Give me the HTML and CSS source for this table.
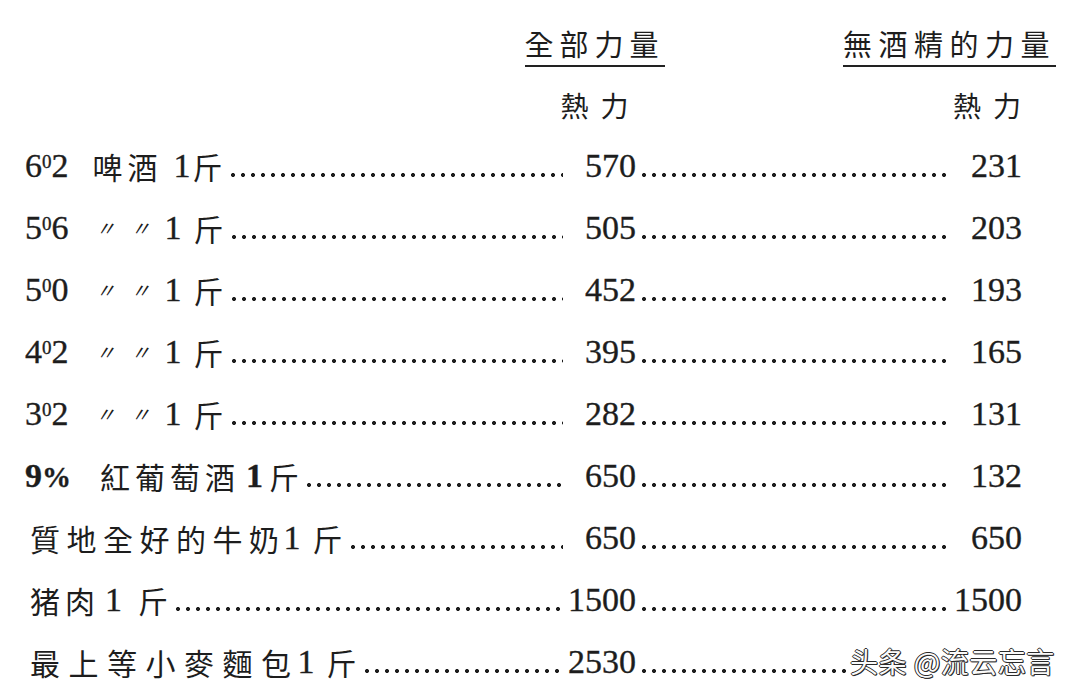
FILE: index.html
```html
<!DOCTYPE html>
<html lang="zh-Hant">
<head>
<meta charset="utf-8">
<title>熱力表</title>
<link rel="stylesheet" href="styles.css">
</head>
<body>
<div class="page">
  <div class="hrow hrow1">
    <span class="head head-n1"><span class="ul">全部力量</span></span>
    <span class="head head-n2"><span class="ul wide">無酒精的力量</span></span>
  </div>
  <div class="hrow hrow2">
    <span class="unit unit-n1">熱力</span>
    <span class="unit unit-n2">熱力</span>
  </div>

  <div class="row">
    <div class="label"><span class="code">6<sup>0</sup>2</span><span class="cjk gap-l">啤酒</span><span class="one">1</span><span class="cjk">斤</span><span class="lead"></span></div>
    <div class="n1">570</div><div class="lead lead2"></div><div class="n2">231</div>
  </div>
  <div class="row">
    <div class="label"><span class="code">5<sup>0</sup>6</span><span class="ditto d1">〃</span><span class="ditto">〃</span><span class="one one-d">1</span><span class="cjk">斤</span><span class="lead"></span></div>
    <div class="n1">505</div><div class="lead lead2"></div><div class="n2">203</div>
  </div>
  <div class="row">
    <div class="label"><span class="code">5<sup>0</sup>0</span><span class="ditto d1">〃</span><span class="ditto">〃</span><span class="one one-d">1</span><span class="cjk">斤</span><span class="lead"></span></div>
    <div class="n1">452</div><div class="lead lead2"></div><div class="n2">193</div>
  </div>
  <div class="row">
    <div class="label"><span class="code">4<sup>0</sup>2</span><span class="ditto d1">〃</span><span class="ditto">〃</span><span class="one one-d">1</span><span class="cjk">斤</span><span class="lead"></span></div>
    <div class="n1">395</div><div class="lead lead2"></div><div class="n2">165</div>
  </div>
  <div class="row">
    <div class="label"><span class="code">3<sup>0</sup>2</span><span class="ditto d1">〃</span><span class="ditto">〃</span><span class="one one-d">1</span><span class="cjk">斤</span><span class="lead"></span></div>
    <div class="n1">282</div><div class="lead lead2"></div><div class="n2">131</div>
  </div>
  <div class="row">
    <div class="label"><span class="code bold">9<span class="pct">%</span></span><span class="cjk gap-w">紅葡萄酒</span><span class="one one-w bold">1</span><span class="cjk">斤</span><span class="lead"></span></div>
    <div class="n1">650</div><div class="lead lead2"></div><div class="n2">132</div>
  </div>
  <div class="row">
    <div class="label"><span class="cjk first milk">質地全好的牛奶</span><span class="one one-t">1</span><span class="cjk">斤</span><span class="lead"></span></div>
    <div class="n1">650</div><div class="lead lead2"></div><div class="n2">650</div>
  </div>
  <div class="row">
    <div class="label"><span class="cjk first">猪肉</span><span class="one one-p">1</span><span class="cjk">斤</span><span class="lead"></span></div>
    <div class="n1">1500</div><div class="lead lead2"></div><div class="n2">1500</div>
  </div>
  <div class="row">
    <div class="label"><span class="cjk first bread">最上等小麥麵包</span><span class="one one-t">1</span><span class="cjk">斤</span><span class="lead"></span></div>
    <div class="n1">2530</div><div class="lead lead2"></div><div class="n2"></div>
  </div>

  <div class="watermark">头条 @流云忘言</div>
</div>
</body>
</html>
```

FILE: styles.css
```css
html, body {
  margin: 0;
  padding: 0;
  background: #ffffff;
}

body {
  color: #1d1d1d;
  font-family: "Liberation Serif", "Noto Sans CJK TC", serif;
}

.page {
  position: relative;
  width: 1080px;
  height: 696px;
  padding-left: 25px;
  box-sizing: border-box;
  overflow: hidden;
}

.row,
.hrow {
  display: grid;
  grid-template-columns: 538px 73px 314px 74px;
}

/* header line 1 */
.hrow1 {
  height: 75px;
  align-items: start;
}

.head {
  padding-top: 25px;
  font-family: "Noto Sans CJK TC", sans-serif;
  font-size: 29px;
  line-height: 37px;
  white-space: nowrap;
}

.head-n1 {
  grid-column: 2;
  justify-self: center;
  margin-right: 10px;
}

.head-n2 {
  grid-column: 4;
  justify-self: end;
  margin-right: -32px;
}

.ul {
  display: inline-block;
  letter-spacing: 6px;
  padding-bottom: 3px;
  border-bottom: 2px solid #222;
}

.ul.wide {
  letter-spacing: 6.5px;
}

/* header line 2 */
.hrow2 {
  height: 60px;
  align-items: center;
}

.unit {
  font-family: "Noto Sans CJK TC", sans-serif;
  font-size: 28px;
  line-height: 36px;
  letter-spacing: 12px;
  white-space: nowrap;
}

.unit-n1 {
  grid-column: 2;
  justify-self: center;
  margin-left: 2px;
}

.unit-n2 {
  grid-column: 4;
  justify-self: center;
  margin-left: 12px;
}

/* data rows */
.row {
  height: 62px;
  line-height: 62px;
  font-size: 34px;
}

.row .code,
.row .one,
.n1,
.n2 {
  -webkit-text-stroke: 0.35px #1d1d1d;
}

.label {
  display: flex;
  align-items: stretch;
  white-space: nowrap;
}

.code sup {
  font-size: 19px;
  line-height: 0;
  vertical-align: 9px;
}

.bold {
  font-weight: bold;
}

.pct {
  font-size: 29px;
}

.cjk {
  font-family: "Noto Sans CJK TC", sans-serif;
  font-size: 30px;
  letter-spacing: 5px;
}

.first {
  margin-left: 5px;
}

.milk {
  letter-spacing: 6.5px;
}

.bread {
  letter-spacing: 8.5px;
}

.gap-l {
  margin-left: 24px;
}

.gap-w {
  margin-left: 29px;
}

.ditto {
  font-family: "Noto Sans CJK TC", sans-serif;
  font-size: 20px;
  font-style: italic;
  margin-left: 15px;
}

.d1 {
  margin-left: 27px;
}

.one {
  margin-left: 11px;
  margin-right: 2px;
}

.one-d {
  margin-left: 14px;
  margin-right: 12px;
}

.one-w {
  margin-left: 6px;
  margin-right: 6px;
}

.one-t {
  margin-left: -2px;
  margin-right: 12px;
}

.one-p {
  margin-left: 5px;
  margin-right: 16px;
}

.lead {
  flex: 1;
  margin-left: 0;
  background-image: radial-gradient(circle, #1d1d1d 0 1.7px, rgba(0, 0, 0, 0) 2.3px);
  background-size: 10px 6px;
  background-repeat: repeat-x;
  background-position: 0 37px;
}

.lead2 {
  margin-left: 3px;
}

.n1,
.n2 {
  text-align: right;
  white-space: nowrap;
}

.n2 {
  padding-right: 2px;
}

/* watermark overlay */
.watermark {
  position: absolute;
  left: 848px;
  top: 643px;
  padding: 0 2px;
  background: #ffffff;
  font-family: "Noto Sans CJK SC", sans-serif;
  font-size: 28px;
  line-height: 36px;
  letter-spacing: 0.5px;
  color: #fafafa;
  text-shadow:
    1px 0 0 #2a2a2a,
    -1px 0 0 #2a2a2a,
    0 1px 0 #2a2a2a,
    0 -1px 0 #2a2a2a,
    1px 1px 0 #2a2a2a;
}
```
